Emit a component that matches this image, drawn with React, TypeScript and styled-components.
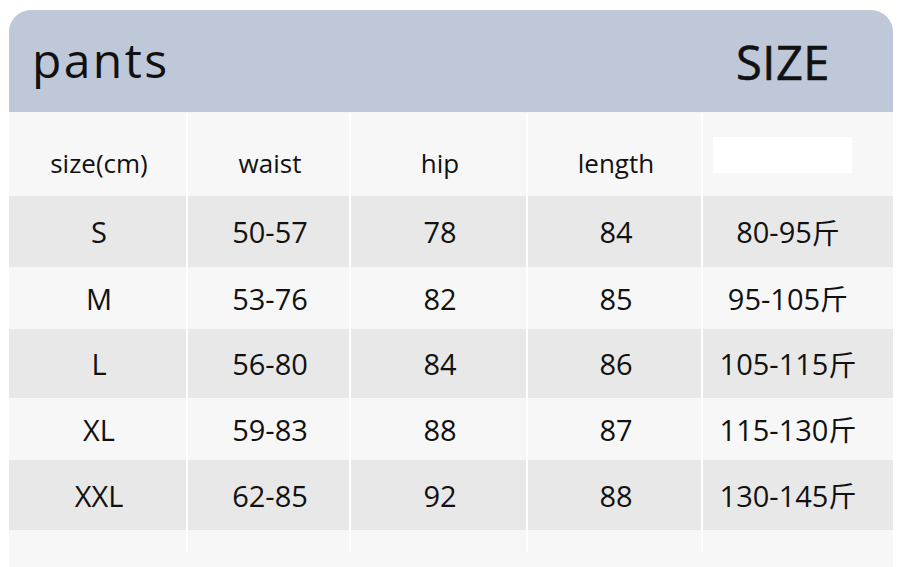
import React from "react";
import styled, { createGlobalStyle } from "styled-components";

const Global = createGlobalStyle`
  html, body { margin: 0; padding: 0; background: #ffffff; }
  body { font-family: "Open Sans", "Noto Sans", "Noto Sans CJK SC", sans-serif; color: #111111; }
`;

const Card = styled.div`
  margin: 10px 0 0 9px;
  width: 884px;
  height: 557px;
  border-radius: 22px 22px 0 0;
  overflow: hidden;
  background: #f7f7f7;
  display: flex;
  flex-direction: column;
`;

const Header = styled.div`
  height: 102px;
  background: #bec8d8;
  display: flex;
  align-items: center;
  justify-content: space-between;
  padding: 0 63px 0 23px;
  border-bottom: 1px solid #f4f6f9;
`;

const Title = styled.div`
  font-size: 48px;
  letter-spacing: 2.4px;
  line-height: 1;
  margin-top: -2px;
`;

const SizeLabel = styled.div`
  font-size: 47px;
  font-weight: 500;
  letter-spacing: 0.5px;
  line-height: 1;
  margin-top: 3px;
  -webkit-text-stroke: 0.6px #111111;
`;

const Grid = styled.div`
  display: grid;
  grid-template-columns: 177px 161px 175px 173px 1fr;
  grid-template-rows: 83px 71px 62px 69px 62px 70px 22px;
  column-gap: 2px;
  background: #ffffff;
`;

const Cell = styled.div<{ $shade: "light" | "dark"; $last?: boolean; $head?: boolean }>`
  background: ${(p) => (p.$shade === "dark" ? "#e8e8e8" : "#f7f7f7")};
  display: flex;
  align-items: center;
  justify-content: center;
  font-size: ${(p) => (p.$head ? "26px" : "29px")};
  padding-top: ${(p) => (p.$head ? "16px" : "0")};
  padding-right: ${(p) => (p.$last ? "20px" : "0")};
  padding-left: ${(p) => (p.$last ? "0" : "3px")};
  white-space: nowrap;
`;

const BlankCell = styled.div`
  background: #f7f7f7;
  display: flex;
  align-items: center;
  padding-left: 10px;
`;

const WhiteBox = styled.div`
  width: 139px;
  height: 36px;
  background: #ffffff;
`;

const Jin = styled.span`
  font-family: "Noto Sans CJK SC", sans-serif;
  font-size: 28px;
`;

const Foot = styled.div`
  flex: 1;
  background: #f7f7f7;
`;

const heads = ["size(cm)", "waist", "hip", "length"];
const rows = [
  ["S", "50-57", "78", "84", "80-95"],
  ["M", "53-76", "82", "85", "95-105"],
  ["L", "56-80", "84", "86", "105-115"],
  ["XL", "59-83", "88", "87", "115-130"],
  ["XXL", "62-85", "92", "88", "130-145"],
];

export default function App() {
  return (
    <>
      <Global />
      <Card>
        <Header>
          <Title>pants</Title>
          <SizeLabel>SIZE</SizeLabel>
        </Header>
        <Grid>
          {heads.map((h) => (
            <Cell key={h} $shade="light" $head>
              {h}
            </Cell>
          ))}
          <BlankCell>
            <WhiteBox />
          </BlankCell>
          {rows.map((r, i) =>
            r.map((v, j) => (
              <Cell key={`${i}-${j}`} $shade={i % 2 === 0 ? "dark" : "light"} $last={j === 4}>
                {v}
                {j === 4 && <Jin>斤</Jin>}
              </Cell>
            ))
          )}
          {[0, 1, 2, 3, 4].map((k) => (
            <Cell key={`t${k}`} $shade="light" />
          ))}
        </Grid>
        <Foot />
      </Card>
    </>
  );
}
